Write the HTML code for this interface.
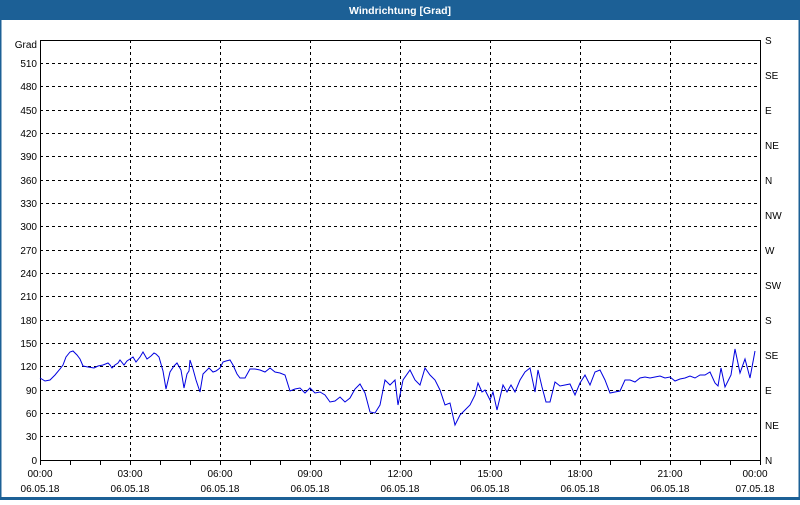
<!DOCTYPE html>
<html><head><meta charset="utf-8"><style>
body{margin:0;width:800px;height:500px;overflow:hidden;background:#fff;font-family:"Liberation Sans","DejaVu Sans",sans-serif}
</style></head><body>
<svg width="800" height="500" xmlns="http://www.w3.org/2000/svg" font-family="Liberation Sans, DejaVu Sans, sans-serif" font-size="10">
<rect x="0" y="0" width="800" height="500" fill="#fff"/>
<rect x="0" y="0" width="800" height="20" fill="#1c6096"/>
<rect x="0" y="0" width="1.5" height="500" fill="#1c6096"/>
<rect x="798.5" y="0" width="1.5" height="500" fill="#1c6096"/>
<rect x="0" y="497" width="800" height="3" fill="#1c6096"/>
<text x="400" y="14" text-anchor="middle" fill="#fff" font-weight="bold" font-size="10.5">Windrichtung [Grad]</text>
<g stroke="#000" stroke-width="1" stroke-dasharray="3,3" shape-rendering="crispEdges">
<line x1="40" y1="63.5" x2="760" y2="63.5"/><line x1="40" y1="86.5" x2="760" y2="86.5"/><line x1="40" y1="110.5" x2="760" y2="110.5"/><line x1="40" y1="133.5" x2="760" y2="133.5"/><line x1="40" y1="156.5" x2="760" y2="156.5"/><line x1="40" y1="180.5" x2="760" y2="180.5"/><line x1="40" y1="203.5" x2="760" y2="203.5"/><line x1="40" y1="226.5" x2="760" y2="226.5"/><line x1="40" y1="250.5" x2="760" y2="250.5"/><line x1="40" y1="273.5" x2="760" y2="273.5"/><line x1="40" y1="296.5" x2="760" y2="296.5"/><line x1="40" y1="320.5" x2="760" y2="320.5"/><line x1="40" y1="343.5" x2="760" y2="343.5"/><line x1="40" y1="366.5" x2="760" y2="366.5"/><line x1="40" y1="390.5" x2="760" y2="390.5"/><line x1="40" y1="413.5" x2="760" y2="413.5"/><line x1="40" y1="436.5" x2="760" y2="436.5"/>
<line x1="130.5" y1="40" x2="130.5" y2="460"/><line x1="220.5" y1="40" x2="220.5" y2="460"/><line x1="310.5" y1="40" x2="310.5" y2="460"/><line x1="400.5" y1="40" x2="400.5" y2="460"/><line x1="490.5" y1="40" x2="490.5" y2="460"/><line x1="580.5" y1="40" x2="580.5" y2="460"/><line x1="670.5" y1="40" x2="670.5" y2="460"/>
</g>
<rect x="40.5" y="40.5" width="720" height="420" fill="none" stroke="#000" shape-rendering="crispEdges"/>
<g stroke="#000" shape-rendering="crispEdges">
<line x1="40.5" y1="460" x2="40.5" y2="465"/><line x1="70.5" y1="460" x2="70.5" y2="465"/><line x1="100.5" y1="460" x2="100.5" y2="465"/><line x1="130.5" y1="460" x2="130.5" y2="465"/><line x1="160.5" y1="460" x2="160.5" y2="465"/><line x1="190.5" y1="460" x2="190.5" y2="465"/><line x1="220.5" y1="460" x2="220.5" y2="465"/><line x1="250.5" y1="460" x2="250.5" y2="465"/><line x1="280.5" y1="460" x2="280.5" y2="465"/><line x1="310.5" y1="460" x2="310.5" y2="465"/><line x1="340.5" y1="460" x2="340.5" y2="465"/><line x1="370.5" y1="460" x2="370.5" y2="465"/><line x1="400.5" y1="460" x2="400.5" y2="465"/><line x1="430.5" y1="460" x2="430.5" y2="465"/><line x1="460.5" y1="460" x2="460.5" y2="465"/><line x1="490.5" y1="460" x2="490.5" y2="465"/><line x1="520.5" y1="460" x2="520.5" y2="465"/><line x1="550.5" y1="460" x2="550.5" y2="465"/><line x1="580.5" y1="460" x2="580.5" y2="465"/><line x1="610.5" y1="460" x2="610.5" y2="465"/><line x1="640.5" y1="460" x2="640.5" y2="465"/><line x1="670.5" y1="460" x2="670.5" y2="465"/><line x1="700.5" y1="460" x2="700.5" y2="465"/><line x1="730.5" y1="460" x2="730.5" y2="465"/><line x1="760.5" y1="460" x2="760.5" y2="465"/>
</g>
<polyline fill="none" stroke="#0000e0" stroke-width="1" points="40,378 45,381 50,380 55,375 60,369 63,365 66,357 70,352 73,351 77,355 80,359 83,366 88,367 94,368 98,366 103,365 108,363 110,365 112,368 115,365 118,363 120,360 124,365 127,361 130,359 133,357 136,362 140,357 143,352 147,359 151,356 154,353 156,354 159,357 163,371 166,389 170,372 174,366 177,363 181,370 184,388 187,374 189,371 190,360 193,369 196,380 200,392 203,374 206,371 209,368 213,372 216,371 220,368 223,362 226,361 230,360 233,365 237,374 240,378 245,378 250,369 255,369 260,370 265,372 270,368 275,372 280,373 285,375 290,391 295,389 300,388 305,393 310,388 315,393 320,392 325,395 330,402 335,401 340,397 345,402 350,398 355,389 360,384 365,393 370,412 375,413 380,405 385,380 390,385 395,380 398,405 403,380 410,370 415,380 420,385 425,368 430,375 435,380 440,390 445,405 450,403 455,425 460,415 465,410 470,405 475,395 478,383 482,392 485,390 490,400 493,392 497,410 503,385 507,392 511,385 515,392 520,380 525,372 530,368 535,392 538,370 542,387 546,402 550,402 555,382 560,386 565,385 570,384 575,395 580,383 585,375 590,385 595,372 600,370 605,380 610,393 615,392 620,391 625,380 630,380 635,382 640,378 645,377 650,378 655,377 660,376 665,378 670,377 675,381 680,379 685,378 690,376 695,378 700,375 705,375 710,372 715,383 718,386 721,368 725,387 731,375 735,349 740,373 745,359 750,378 755,351"/>
<g text-anchor="end" fill="#000">
<text x="37" y="48">Grad</text>
<text x="37" y="67">510</text><text x="37" y="90">480</text><text x="37" y="114">450</text><text x="37" y="137">420</text><text x="37" y="160">390</text><text x="37" y="184">360</text><text x="37" y="207">330</text><text x="37" y="230">300</text><text x="37" y="254">270</text><text x="37" y="277">240</text><text x="37" y="300">210</text><text x="37" y="324">180</text><text x="37" y="347">150</text><text x="37" y="370">120</text><text x="37" y="394">90</text><text x="37" y="417">60</text><text x="37" y="440">30</text><text x="37" y="464">0</text>
</g>
<g fill="#000">
<text x="765" y="44">S</text><text x="765" y="79">SE</text><text x="765" y="114">E</text><text x="765" y="149">NE</text><text x="765" y="184">N</text><text x="765" y="219">NW</text><text x="765" y="254">W</text><text x="765" y="289">SW</text><text x="765" y="324">S</text><text x="765" y="359">SE</text><text x="765" y="394">E</text><text x="765" y="429">NE</text><text x="765" y="464">N</text>
</g>
<g text-anchor="middle" fill="#000">
<text x="40" y="477">00:00</text><text x="130" y="477">03:00</text><text x="220" y="477">06:00</text><text x="310" y="477">09:00</text><text x="400" y="477">12:00</text><text x="490" y="477">15:00</text><text x="580" y="477">18:00</text><text x="670" y="477">21:00</text><text x="755" y="477">00:00</text>
<text x="40" y="492">06.05.18</text><text x="130" y="492">06.05.18</text><text x="220" y="492">06.05.18</text><text x="310" y="492">06.05.18</text><text x="400" y="492">06.05.18</text><text x="490" y="492">06.05.18</text><text x="580" y="492">06.05.18</text><text x="670" y="492">06.05.18</text><text x="755" y="492">07.05.18</text>
</g>
</svg>
</body></html>
